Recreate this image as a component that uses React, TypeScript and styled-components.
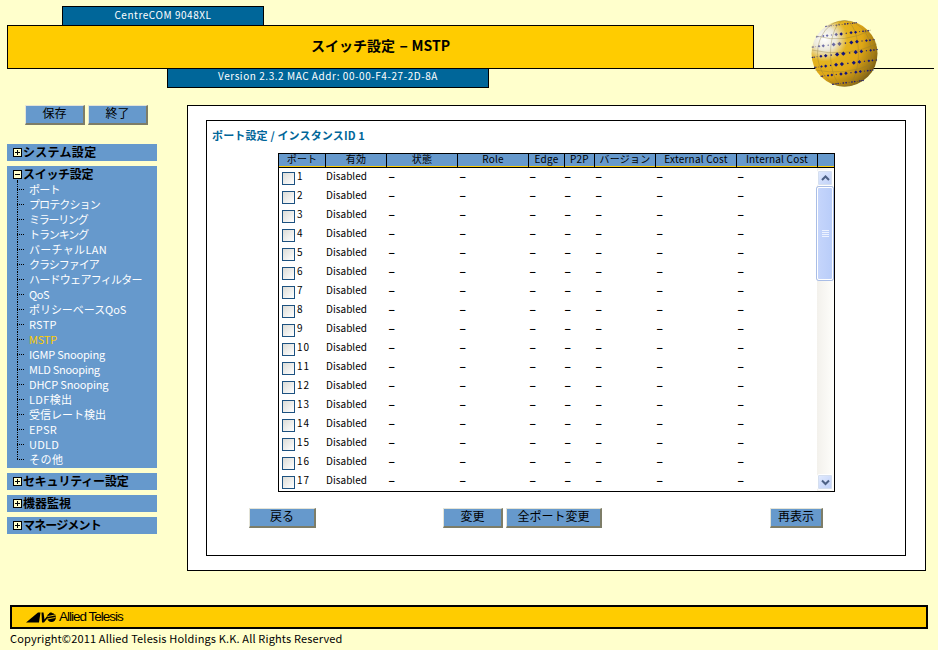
import React from "react";
import styled, { createGlobalStyle } from "styled-components";

const FONT = `"Noto Sans CJK JP", "Noto Sans", sans-serif`;
const TEAL = "#006699";
const BLUE = "#6699CC";
const GOLD = "#FFCC00";
const CREAM = "#FFFFCC";

const Global = createGlobalStyle`
  * { box-sizing: border-box; }
  html, body { margin: 0; padding: 0; background: ${CREAM}; overflow: hidden; }
  body { font-family: ${FONT}; color: #000; }
`;

const Page = styled.div`
  width: 938px;
  height: 650px;
  padding-top: 6px;
  display: flex;
  flex-direction: column;
`;

const Header = styled.header`
  position: relative;
  display: flex;
  flex-direction: column;
  padding-left: 7px;
`;

const Tab = styled.div<{ $width: number; $indent: number }>`
  width: ${(p) => p.$width}px;
  height: 20px;
  margin-left: ${(p) => p.$indent}px;
  background: ${TEAL};
  border: 1px solid #000;
  color: #fff;
  font-size: 10px;
  line-height: 16px;
  text-align: center;
  letter-spacing: 0.55px;
`;

const ProductTab = styled(Tab)`
  margin-bottom: -1px;
`;

const VersionTab = styled(Tab)`
  height: 19px;
  border-top: 0;
  line-height: 14px;
`;

const TitleRow = styled.div`
  display: flex;
  align-items: flex-end;
  width: 927px;
`;

const TitleBar = styled.h1`
  margin: 0;
  width: 747px;
  height: 44px;
  background: ${GOLD};
  border: 1px solid #000;
  font-size: 14px;
  font-weight: 700;
  line-height: 38px;
  text-align: center;
`;

const TitleDash = styled.span`
  display: inline-block;
  margin: 0 2px 0 3px;
  transform: scaleX(1.8);
`;

const TitleRule = styled.div`
  flex: 1;
  height: 1px;
  background: #000;
`;

const GlobeSlot = styled.div`
  position: absolute;
  left: 811px;
  top: 14px;
  width: 67px;
  height: 67px;
`;

const Body = styled.div`
  display: flex;
  margin-top: 17px;
  padding-left: 7px;
`;

const Side = styled.nav`
  width: 150px;
  display: flex;
  flex-direction: column;
`;

const SideButtons = styled.div`
  display: flex;
  gap: 3px;
  padding-left: 18px;
  margin-bottom: 19px;
`;

const Bevel = styled.button<{ $width: number }>`
  width: ${(p) => p.$width}px;
  height: 20px;
  padding: 0 0 3px;
  background: ${BLUE};
  border-style: solid;
  border-width: 1px 2px 2px 1px;
  border-color: #e4e4d8 #7d7d68 #7d7d68 #e4e4d8;
  font-family: ${FONT};
  font-size: 12px;
  line-height: 14px;
  color: #000;
`;

const Section = styled.div`
  background: ${BLUE};
  margin-bottom: 5px;
  padding-bottom: 1px;
`;

const SectionHead = styled.div`
  height: 16px;
  padding-left: 6px;
  display: flex;
  align-items: center;
  font-size: 12px;
  font-weight: 700;
  line-height: 15px;
`;

const SectionLabel = styled.span<{ $track: number }>`
  margin-bottom: 2px;
  letter-spacing: ${(p) => p.$track}px;
`;

const Toggle = styled.span<{ $open?: boolean }>`
  position: relative;
  flex: none;
  width: 9px;
  height: 9px;
  margin-top: 1px;
  margin-right: 1px;
  background: ${CREAM};
  border: 1px solid #000;
  &::before {
    content: "";
    position: absolute;
    left: 1px;
    right: 1px;
    top: 3px;
    height: 1px;
    background: #000;
  }
  &::after {
    content: "";
    display: ${(p) => (p.$open ? "none" : "block")};
    position: absolute;
    top: 1px;
    bottom: 1px;
    left: 3px;
    width: 1px;
    background: #000;
  }
`;

const Tree = styled.ul`
  position: relative;
  margin: 0;
  padding: 0 0 0 10px;
  list-style: none;
  &::before {
    content: "";
    position: absolute;
    left: 10px;
    top: -2px;
    width: 1px;
    height: 2px;
    background: #000;
  }
`;

const TreeItem = styled.li<{ $active?: boolean; $track: number }>`
  height: 15px;
  display: flex;
  align-items: center;
  color: ${(p) => (p.$active ? GOLD : "#fff")};
  font-size: 11px;
  line-height: 14px;
  letter-spacing: ${(p) => p.$track}px;
`;

const TreeLabel = styled.span`
  margin-bottom: 2px;
`;

const Branch = styled.span<{ $last?: boolean }>`
  flex: none;
  width: 12px;
  height: 15px;
  background-image:
    repeating-linear-gradient(to bottom, #000 0 1px, transparent 1px 2px),
    repeating-linear-gradient(to right, #000 0 1px, transparent 1px 2px);
  background-repeat: no-repeat;
  background-size: 1px ${(p) => (p.$last ? "8px" : "15px")}, 8px 1px;
  background-position: 0 0, 0 7px;
`;

const Main = styled.main`
  width: 739px;
  height: 466px;
  margin-left: 30px;
  padding: 14px 19px 14px 18px;
  background: #fff;
  border: 1px solid #000;
`;

const Inner = styled.div`
  height: 436px;
  border: 1px solid #000;
  padding: 6px 5px 0;
`;

const SectionTitle = styled.h2`
  margin: 0 0 10px;
  height: 16px;
  color: ${TEAL};
  font-size: 11px;
  font-weight: 700;
  line-height: 16px;
  letter-spacing: 0.15px;
`;

const Table = styled.div`
  width: 557px;
  height: 339px;
  margin-left: 66px;
  border: 1px solid #000;
`;

const HeadRow = styled.div`
  display: grid;
  grid-template-columns: 47px 61px 71px 71px 36px 30px 61px 81px 81px 16px;
  height: 14px;
  background: ${BLUE};
  border-bottom: 1px solid #000;
  box-shadow: inset 0 -1px 0 ${GOLD};
`;

const HeadCell = styled.div`
  border-right: 1px solid #000;
  font-size: 10px;
  line-height: 9px;
  text-align: center;
  letter-spacing: 0.2px;
  &:last-child { border-right: 0; }
`;

const ListArea = styled.div`
  display: flex;
  height: 323px;
`;

const List = styled.div`
  flex: 1;
  overflow: hidden;
`;

const Row = styled.div`
  display: grid;
  grid-template-columns: 47px 62px 71px 70px 35px 31px 61px 81px 81px;
  height: 19px;
  font-size: 10px;
  line-height: 16px;
  letter-spacing: 0.05px;
`;

const PortCell = styled.label`
  display: flex;
  align-items: flex-start;
  gap: 2px;
  padding-left: 3px;
  letter-spacing: 1px;
`;

const Check = styled.input.attrs({ type: "checkbox" })`
  appearance: none;
  flex: none;
  width: 13px;
  height: 13px;
  margin: 4px 0 0;
  border: 1px solid #1c5180;
  background: linear-gradient(135deg, #dcdcd7, #ffffff);
`;

const Cell = styled.div`
  white-space: nowrap;
`;

const Dash = styled.span`
  display: inline-block;
  font-weight: 700;
  transform: scaleX(2);
  transform-origin: left center;
`;

const Scroll = styled.div`
  flex: none;
  width: 17px;
  padding: 2px 1px 1px 0;
  display: flex;
  flex-direction: column;
  background: linear-gradient(to right, #f3f1ec, #fefefb);
`;

const ScrollButton = styled.div`
  flex: none;
  height: 16px;
  display: flex;
  align-items: center;
  justify-content: center;
  background: linear-gradient(135deg, #e2ebfe, #bfd0f8);
  border: 1px solid #fff;
  border-radius: 2px;
  box-shadow: 0 0 0 1px #d5dfef inset;
`;

const Thumb = styled.div`
  flex: none;
  height: 93px;
  margin-top: 1px;
  display: flex;
  align-items: center;
  justify-content: center;
  background: linear-gradient(to right, #c5d5fb, #b9cdf9);
  border: 1px solid #fff;
  border-radius: 2px;
  box-shadow: 0 0 0 1px #a9bde6;
`;

const Track = styled.div`
  flex: 1;
`;

const Actions = styled.div`
  display: flex;
  margin-top: 16px;
  padding-left: 37px;
`;

const ActionButton = styled(Bevel)<{ $gap?: number }>`
  margin-left: ${(p) => p.$gap ?? 0}px;
`;

const Footer = styled.footer`
  margin: 34px 0 0 10px;
  width: 918px;
  height: 24px;
  padding: 0 0 0 14px;
  display: flex;
  align-items: center;
  gap: 3px;
  background: ${GOLD};
  border: 2px solid #000;
`;

const Brand = styled.span`
  font-family: "Liberation Sans", sans-serif;
  font-size: 13.5px;
  letter-spacing: -1px;
  line-height: 18px;
`;

const Copy = styled.div`
  margin: 1px 0 0 10px;
  font-size: 11px;
  line-height: 16px;
  letter-spacing: 0.15px;
`;

const Globe = () => {
  const dots: React.ReactElement[] = [];
  const tilt = -0.12;
  [-62, -37, -18, 0, 18, 37, 62].forEach((lat, r) => {
    let idx = 0;
    for (let lon = -84; lon <= 84; lon += 11) {
      const la = (lat * Math.PI) / 180;
      const lo = ((lon + (r % 2) * 5) * Math.PI) / 180;
      const x0 = Math.cos(la) * Math.sin(lo);
      const y0 = -Math.sin(la);
      const x = 33.5 + 33 * (x0 * Math.cos(tilt) - y0 * Math.sin(tilt));
      const y = 33.5 + 33 * (x0 * Math.sin(tilt) + y0 * Math.cos(tilt));
      const depth = Math.max(Math.cos(la) * Math.cos(lo), 0);
      const s = (idx % 3 === 2 ? 1 : 2.2) * Math.max(depth, 0.35);
      dots.push(
        <polygon
          key={`${r}-${lon}`}
          points={`${x},${y - s} ${x + s},${y} ${x},${y + s} ${x - s},${y}`}
          fill="#14147a"
          opacity={x < 30 && y < 30 ? 0.6 : 1}
        />
      );
      idx += 1;
    }
  });
  return (
    <svg width="67" height="67" viewBox="0 0 67 67">
      <defs>
        <radialGradient id="g" cx="0.2" cy="0.28" r="0.95">
          <stop offset="0" stopColor="#ffffff" />
          <stop offset="0.18" stopColor="#ece9da" />
          <stop offset="0.36" stopColor="#e4b420" />
          <stop offset="0.6" stopColor="#dfa716" />
          <stop offset="0.82" stopColor="#a27a14" />
          <stop offset="1" stopColor="#5a4712" />
        </radialGradient>
      </defs>
      <circle cx="33.5" cy="33.5" r="33" fill="url(#g)" />
      <g fill="none" stroke="#8a7a3a" strokeWidth="0.5" opacity="0.7">
        <ellipse cx="33.5" cy="33.5" rx="14" ry="33" />
        <ellipse cx="33.5" cy="33.5" rx="27" ry="33" />
        <path d="M1 30 Q34 38 66 24" />
        <path d="M5 16 Q34 24 60 10" />
        <path d="M4 50 Q34 56 62 44" />
      </g>
      {dots}
    </svg>
  );
};

const LogoMark = () => (
  <svg width="30" height="11" viewBox="0 0 30 11">
    <polygon points="0,10.5 12,0.5 14.5,0.5 13,10.5" fill="#000" />
    <polygon points="15.5,0.5 17.5,0.5 18.5,7.5 24,0.5 26,0.5 18,10.5 16,10.5" fill="#000" />
    <ellipse cx="25.5" cy="5.5" rx="4.4" ry="4.6" fill="#000" />
    <path d="M21.5 4.5 L29 3 M21.3 7 L29.5 5.5" stroke={GOLD} strokeWidth="0.9" />
  </svg>
);

const Up = ({ flip }: { flip?: boolean }) => (
  <svg width="9" height="7" viewBox="0 0 9 7">
    <path d={flip ? "M1 1.5 L4.5 5 L8 1.5" : "M1 5 L4.5 1.5 L8 5"} fill="none" stroke="#4d6185" strokeWidth="2" />
  </svg>
);

const Grip = () => (
  <svg width="7" height="8" viewBox="0 0 7 8">
    <path d="M0 .5H7M0 2.5H7M0 4.5H7M0 6.5H7" stroke="#eef3ff" strokeWidth="1" />
  </svg>
);

const upper: [string, number][] = [["システム設定", 0.3]];
const lower: [string, number][] = [["セキュリティー設定", -0.2], ["機器監視", 0], ["マネージメント", -0.85]];
const items: [string, number][] = [
  ["ポート", -0.75], ["プロテクション", -0.88], ["ミラーリング", -1.25], ["トランキング", -1.1],
  ["バーチャルLAN", 0.3], ["クラシファイア", -1], ["ハードウェアフィルター", -0.72], ["QoS", -0.45],
  ["ポリシーベースQoS", -0.05], ["RSTP", 0.3], ["MSTP", -0.2], ["IGMP Snooping", -0.2],
  ["MLD Snooping", -0.3], ["DHCP Snooping", -0.15], ["LDF検出", 0.35], ["受信レート検出", 0],
  ["EPSR", 0.3], ["UDLD", 0.3], ["その他", 0.55],
];
const heads = ["ポート", "有効", "状態", "Role", "Edge", "P2P", "バージョン", "External Cost", "Internal Cost", ""];
const ports = Array.from({ length: 17 }, (_, i) => i + 1);

export default function App() {
  return (
    <Page>
      <Global />
      <Header>
        <ProductTab $width={202} $indent={55}>CentreCOM 9048XL</ProductTab>
        <TitleRow>
          <TitleBar>スイッチ設定 <TitleDash>-</TitleDash> MSTP</TitleBar>
          <TitleRule />
        </TitleRow>
        <VersionTab $width={322} $indent={160}>Version 2.3.2 MAC Addr: 00-00-F4-27-2D-8A</VersionTab>
        <GlobeSlot><Globe /></GlobeSlot>
      </Header>
      <Body>
        <Side>
          <SideButtons>
            <Bevel $width={60}>保存</Bevel>
            <Bevel $width={60}>終了</Bevel>
          </SideButtons>
          {upper.map(([s, t]) => (
            <Section key={s}><SectionHead><Toggle /><SectionLabel $track={t}>{s}</SectionLabel></SectionHead></Section>
          ))}
          <Section>
            <SectionHead><Toggle $open /><SectionLabel $track={-0.3}>スイッチ設定</SectionLabel></SectionHead>
            <Tree>
              {items.map(([it, track], i) => (
                <TreeItem key={it} $active={it === "MSTP"} $track={track}>
                  <Branch $last={i === items.length - 1} />
                  <TreeLabel>{it}</TreeLabel>
                </TreeItem>
              ))}
            </Tree>
          </Section>
          {lower.map(([s, t]) => (
            <Section key={s}><SectionHead><Toggle /><SectionLabel $track={t}>{s}</SectionLabel></SectionHead></Section>
          ))}
        </Side>
        <Main>
          <Inner>
            <SectionTitle>ポート設定 / インスタンスID 1</SectionTitle>
            <Table>
              <HeadRow>
                {heads.map((h, i) => <HeadCell key={i}>{h}</HeadCell>)}
              </HeadRow>
              <ListArea>
                <List>
                  {ports.map((n) => (
                    <Row key={n}>
                      <PortCell><Check />{n}</PortCell>
                      <Cell>Disabled</Cell>
                      {Array.from({ length: 7 }, (_, i) => <Cell key={i}><Dash>-</Dash></Cell>)}
                    </Row>
                  ))}
                </List>
                <Scroll>
                  <ScrollButton><Up /></ScrollButton>
                  <Thumb><Grip /></Thumb>
                  <Track />
                  <ScrollButton><Up flip /></ScrollButton>
                </Scroll>
              </ListArea>
            </Table>
            <Actions>
              <ActionButton $width={67}>戻る</ActionButton>
              <ActionButton $width={60} $gap={127}>変更</ActionButton>
              <ActionButton $width={96} $gap={3}>全ポート変更</ActionButton>
              <ActionButton $width={53} $gap={168}>再表示</ActionButton>
            </Actions>
          </Inner>
        </Main>
      </Body>
      <Footer><LogoMark /><Brand>Allied Telesis</Brand></Footer>
      <Copy>Copyright©2011 Allied Telesis Holdings K.K. All Rights Reserved</Copy>
    </Page>
  );
}
